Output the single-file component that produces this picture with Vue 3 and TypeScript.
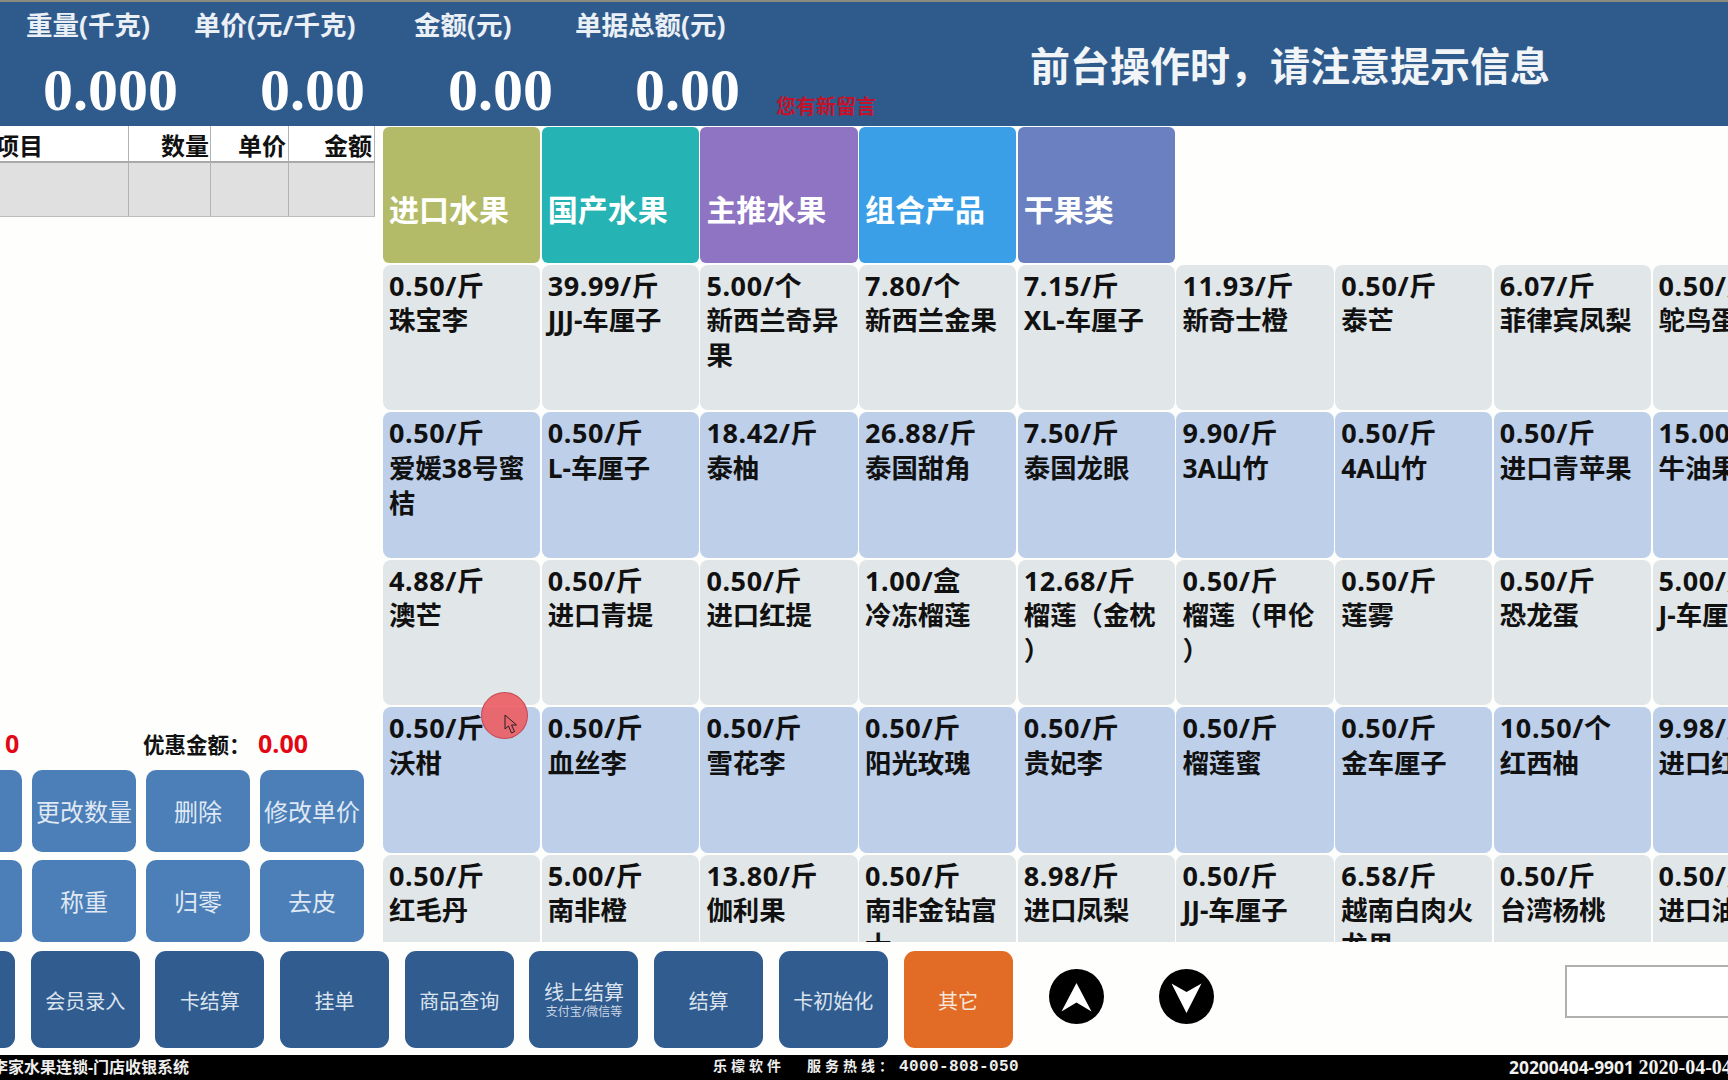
<script setup lang="ts">
interface Item { price: string; name: string }
const raw: string[][] = [
  ['0.50/斤|珠宝李', '39.99/斤|JJJ-车厘子', '5.00/个|新西兰奇异果', '7.80/个|新西兰金果', '7.15/斤|XL-车厘子', '11.93/斤|新奇士橙', '0.50/斤|泰芒', '6.07/斤|菲律宾凤梨', '0.50/斤|鸵鸟蛋'],
  ['0.50/斤|爱媛38号蜜桔', '0.50/斤|L-车厘子', '18.42/斤|泰柚', '26.88/斤|泰国甜角', '7.50/斤|泰国龙眼', '9.90/斤|3A山竹', '0.50/斤|4A山竹', '0.50/斤|进口青苹果', '15.00/斤|牛油果'],
  ['4.88/斤|澳芒', '0.50/斤|进口青提', '0.50/斤|进口红提', '1.00/盒|冷冻榴莲', '12.68/斤|榴莲（金枕）', '0.50/斤|榴莲（甲伦）', '0.50/斤|莲雾', '0.50/斤|恐龙蛋', '5.00/斤|J-车厘子'],
  ['0.50/斤|沃柑', '0.50/斤|血丝李', '0.50/斤|雪花李', '0.50/斤|阳光玫瑰', '0.50/斤|贵妃李', '0.50/斤|榴莲蜜', '0.50/斤|金车厘子', '10.50/个|红西柚', '9.98/斤|进口红柚'],
  ['0.50/斤|红毛丹', '5.00/斤|南非橙', '13.80/斤|伽利果', '0.50/斤|南非金钻富士', '8.98/斤|进口凤梨', '0.50/斤|JJ-车厘子', '6.58/斤|越南白肉火龙果', '0.50/斤|台湾杨桃', '0.50/斤|进口油桃'],
]
const rows: Item[][] = raw.map((r) => r.map((s) => {
  const [price, name] = s.split('|')
  return { price, name }
}))
const tabs = [
  { label: '进口水果', color: '#b4bb68' },
  { label: '国产水果', color: '#26b3b3' },
  { label: '主推水果', color: '#8f74c4' },
  { label: '组合产品', color: '#3a9fe6' },
  { label: '干果类', color: '#6b80c0' },
]
const actions = ['折扣', '更改数量', '删除', '修改单价', '赠送', '称重', '归零', '去皮']
const bottom = ['会员充值', '会员录入', '卡结算', '挂单', '商品查询', '线上结算', '结算', '卡初始化']
</script>

<template>
  <div class="page">
    <header class="top">
      <div class="stats">
        <div class="labels">
          <span>重量(千克)</span><span>单价(元/千克)</span><span>金额(元)</span><span>单据总额(元)</span>
        </div>
        <div class="values">
          <span>0.000</span><span>0.00</span><span>0.00</span><span>0.00</span>
          <span class="notice">您有新留言</span>
        </div>
      </div>
      <div class="title">前台操作时，请注意提示信息</div>
    </header>

    <main class="body">
      <section class="left">
        <div class="table">
          <div class="tr th"><span class="c1">项目</span><span class="c2">数量</span><span class="c3">单价</span><span class="c4">金额</span></div>
          <div class="tr td"><span class="c1"></span><span class="c2"></span><span class="c3"></span><span class="c4"></span></div>
        </div>
        <div class="summary">
          <b class="red count">0</b>
          <b class="disc">优惠金额：</b>
          <b class="red amount">0.00</b>
        </div>
        <div class="actions">
          <button v-for="a in actions" :key="a" class="act">{{ a }}</button>
        </div>
      </section>

      <section class="goods">
        <div v-for="t in tabs" :key="t.label" class="tab" :style="{ background: t.color }">{{ t.label }}</div>
        <div class="tab-fill"></div>
        <template v-for="(r, ri) in rows" :key="ri">
          <div v-for="(it, ci) in r" :key="ci" class="cell" :class="{ alt: ri % 2 === 1 }">
            <div class="price">{{ it.price }}</div>
            <div class="name">{{ it.name }}</div>
          </div>
        </template>
      </section>
    </main>

    <section class="bar">
      <button v-for="b in bottom" :key="b" class="bbtn" :class="{ stacked: b === '线上结算' }">
        <span>{{ b }}</span>
        <small v-if="b === '线上结算'">支付宝/微信等</small>
      </button>
      <button class="bbtn orange">其它</button>
      <svg class="arrow up" viewBox="0 0 55 55"><circle cx="27.5" cy="27.5" r="27.5" fill="#000"/><path d="M27.5 14 L42.5 42.5 L27.5 33.5 L12.5 42.5 Z" fill="#fff"/></svg>
      <svg class="arrow down" viewBox="0 0 55 55"><circle cx="27.5" cy="27.5" r="27.5" fill="#000"/><path d="M27.5 44 L42.5 14.5 L27.5 23 L12.5 14.5 Z" fill="#fff"/></svg>
      <div class="input"></div>
    </section>

    <footer class="foot">
      <span class="f1">李家水果连锁-门店收银系统</span>
      <span class="f2"><i>乐檬软件</i><i class="f2b">服务热线：</i><span class="tel">4000-808-050</span></span>
      <span class="f3">20200404-9901 <em>2020-04-04</em></span>
    </footer>

    <div class="touch">
      <svg class="pointer" viewBox="0 0 14 20"><path d="M1 1 L1 15 L4.5 12 L7.5 19 L10.5 17.5 L7.5 11 L12.5 11 Z" fill="#e8656f" stroke="#222" stroke-width="1"/></svg>
    </div>
  </div>
</template>

<style>
html, body { margin: 0; background: #fefefc; }
</style>

<style scoped>
.page {
  position: relative;
  width: 1728px;
  height: 1080px;
  overflow: hidden;
  display: flex;
  flex-direction: column;
  background: #fefefc;
  font-family: "Noto Sans", "Noto Sans CJK SC", sans-serif;
}
button { font-family: inherit; border: none; padding: 0; }

.top {
  height: 126px;
  flex: none;
  box-sizing: border-box;
  border-top: 2px solid #8b8b80;
  background: #2f5b8c;
  color: #fff;
  display: flex;
}
.stats { width: 1030px; flex: none; }
.labels {
  display: grid;
  grid-template-columns: 168px 220px 161px auto;
  padding-left: 26px;
  height: 42px;
  align-items: center;
  font-size: 26.5px;
  font-weight: 700;
  color: #eaf0f6;
  white-space: nowrap;
}
.values {
  display: grid;
  grid-template-columns: 217px 188px 187px 141px auto;
  padding-left: 43px;
  margin-top: 10px;
  height: 72px;
  align-items: center;
  font-family: "Liberation Serif", serif;
  font-size: 60px;
  font-weight: 700;
  line-height: 72px;
}
.notice {
  font-family: "Noto Sans CJK SC", serif;
  font-size: 20px;
  font-weight: 700;
  line-height: 24px;
  color: #c4122a;
  align-self: end;
  margin-bottom: 8px;
}
.title {
  font-size: 40px;
  font-weight: 700;
  height: 124px;
  line-height: 128px;
  white-space: nowrap;
  color: #f2f5f8;
}

.body { display: flex; height: 816px; flex: none; overflow: hidden; }
.left { width: 375px; flex: none; display: flex; flex-direction: column; }
.table { width: 375px; }
.tr { display: flex; box-sizing: border-box; }
.tr span { box-sizing: border-box; display: block; border-right: 1px solid #b3b3b3; padding-right: 2px; text-align: right; }
.tr .c2 { padding-right: 1px; }
.c1 { width: 129px; overflow: hidden; }
.c2 { width: 82px; }
.c3 { width: 78px; }
.c4 { width: 86px; }
.th {
  height: 37px;
  line-height: 40px;
  border-bottom: 2px solid #a9a9a9;
  font-size: 24px;
  font-weight: 700;
  color: #111;
  background: #fff;
}
.tr .c1 { text-align: left; padding: 0; text-indent: -5px; }
.td { height: 54px; background: #e0e0e0; border-bottom: 1px solid #bdbdbd; }
.summary {
  margin-top: auto;
  height: 40px;
  display: flex;
  align-items: center;
  font-size: 21.5px;
  color: #111;
  margin-bottom: 7px;
}
.red { color: #e30613; font-size: 25px; font-family: "Open Sans", sans-serif; }
.count { margin-left: 5px; width: 138px; }
.disc { width: 115px; }
.actions {
  display: grid;
  grid-template-columns: repeat(4, 104px);
  gap: 8px 10px;
  margin-left: -82px;
}
.act {
  height: 82px;
  padding-bottom: 2px;
  background: #4c7fb8;
  color: #dfe8f3;
  border-radius: 10px;
  font-size: 24px;
}
.goods {
  flex: none;
  margin: 1px 0 0 8px;
  display: grid;
  grid-template-columns: repeat(9, 157.2px);
  grid-template-rows: 136px repeat(5, 145.6px);
  column-gap: 1.5px;
  row-gap: 1.9px;
  height: 815px;
  overflow: hidden;
}
.tab {
  box-sizing: border-box;
  border-radius: 6px;
  color: #fff;
  font-size: 30px;
  font-weight: 700;
  line-height: 40px;
  padding: 63px 0 0 6px;
  white-space: nowrap;
}
.tab-fill { grid-column: span 4; }
.cell {
  box-sizing: border-box;
  background: #e1e6e8;
  border-radius: 8px;
  padding: 3px 6px 0;
  font-size: 26.4px;
  font-weight: 700;
  line-height: 35.3px;
  color: #111;
  line-break: anywhere;
  text-spacing-trim: space-all;
  overflow: hidden;
}
.price { font-size: 27px; letter-spacing: 0.6px; }
.alt { background: #bdcfe9; }

.bar {
  flex: none;
  height: 113px;
  box-sizing: border-box;
  padding-top: 9px;
  display: flex;
  align-items: flex-start;
  margin-left: -94px;
  gap: 15.7px;
}
.bbtn {
  flex: none;
  width: 109px;
  height: 97px;
  box-sizing: border-box;
  padding-top: 4px;
  border-radius: 11px;
  background: #315c8f;
  color: #dbe4ee;
  font-size: 20px;
  display: flex;
  flex-direction: column;
  align-items: center;
  justify-content: center;
  line-height: 25px;
}
.stacked { padding-top: 0; }
.bbtn small { font-size: 12px; line-height: 14px; color: #c9d6e4; }
.orange { background: #e26b26; color: #f6e6da; }
.arrow { flex: none; width: 55px; height: 55px; margin-top: 18px; }
.up { margin-left: 20.8px; }
.down { margin-left: 39.3px; }
.input {
  flex: none;
  width: 200px;
  height: 53px;
  box-sizing: border-box;
  margin: 14px 0 0 335.3px;
  border: 2px solid #b0b0b0;
  background: #fff;
}

.foot {
  flex: none;
  height: 25px;
  background: #000;
  color: #fff;
  display: flex;
  align-items: center;
  white-space: nowrap;
  font-size: 16px;
  font-weight: 700;
  line-height: 25px;
}
.f1 { margin-left: -8px; width: 721px; flex: none; color: #eee; }
.f2 { width: 796px; flex: none; font-family: "Liberation Mono", "Noto Sans CJK SC", monospace; letter-spacing: 0.4px; color: #eee; }
.f2 i { font-style: normal; font-size: 14px; letter-spacing: 4px; }
.f2b { margin-left: 22px; }
.tel { margin-left: 2px; }
.f3 { color: #f2f2f2; font-family: "Noto Sans", sans-serif; font-size: 17.4px; flex: none; }
.f3 em { font-style: normal; font-family: "Liberation Serif", serif; font-size: 20px; }

.touch {
  position: absolute;
  left: 481px;
  top: 692px;
  width: 47px;
  height: 47px;
  box-sizing: border-box;
  border: 1px solid rgba(170, 50, 60, 0.6);
  border-radius: 50%;
  background: rgba(236, 92, 98, 0.9);
}
.pointer { position: absolute; left: 22px; top: 21px; width: 14px; height: 20px; }
</style>
